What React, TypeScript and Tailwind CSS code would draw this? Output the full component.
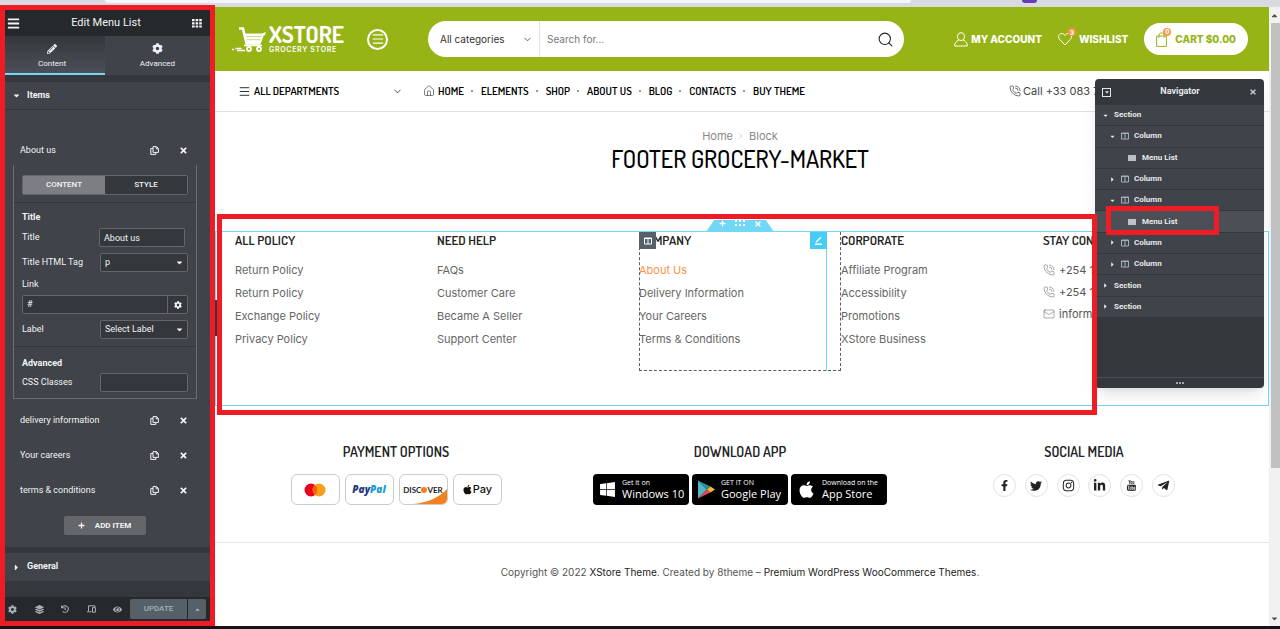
import type { ReactNode } from 'react';
import {
  FaApple,
  FaBars,
  FaCaretDown,
  FaCaretRight,
  FaCaretUp,
  FaCog,
  FaEye,
  FaFacebookF,
  FaHistory,
  FaInstagram,
  FaLayerGroup,
  FaLinkedinIn,
  FaPencilAlt,
  FaPlus,
  FaTelegramPlane,
  FaTimes,
  FaTwitter,
  FaWindows,
} from 'react-icons/fa';
import { TfiYoutube } from 'react-icons/tfi';
import { ChevronDown, ChevronRight, House, Mail, Menu, PhoneCall, Search } from 'lucide-react';

const NAV_LINKS = ['HOME', 'ELEMENTS', 'SHOP', 'ABOUT US', 'BLOG', 'CONTACTS', 'BUY THEME'];

const TREE = [
  { label: 'Section', depth: 0, open: true },
  { label: 'Column', depth: 1, open: true },
  { label: 'Menu List', depth: 2 },
  { label: 'Column', depth: 1 },
  { label: 'Column', depth: 1, open: true },
  { label: 'Menu List', depth: 2, active: true },
  { label: 'Column', depth: 1 },
  { label: 'Column', depth: 1 },
  { label: 'Section', depth: 0 },
  { label: 'Section', depth: 0 },
];

const SOCIAL = [
  { name: 'Facebook', icon: <FaFacebookF size={11} /> },
  { name: 'Twitter', icon: <FaTwitter size={12} /> },
  { name: 'Instagram', icon: <FaInstagram size={13} /> },
  { name: 'LinkedIn', icon: <FaLinkedinIn size={13} /> },
  { name: 'YouTube', icon: <TfiYoutube size={11} /> },
  { name: 'Telegram', icon: <FaTelegramPlane size={13} /> },
];

const HEADING_FONT = "font-['Dosis','Liberation_Sans_Narrow',sans-serif]";

export default function App() {
  return (
    <div className="flex min-h-screen flex-col overflow-hidden bg-white font-['Inter',sans-serif]">
      <BrowserStrip />
      <div className="flex flex-1">
        <EditorPanel />
        <main className="relative min-w-0 flex-1">
          <SiteHeader />
          <MenuBar />
          <PageTitle />
          <FooterColumns />
          <FooterWidgets />
          <div className="mt-[37px] border-t border-[#e6e6e6] pt-[21px] pr-1 text-center text-[10px] leading-4 text-[#555]">
            Copyright © 2022 <a href="#" className="text-[#222]">XStore Theme</a>. Created by 8theme –{' '}
            <a href="#" className="text-[#222]">Premium WordPress WooCommerce Themes</a>.
          </div>
          <Navigator />
        </main>
        <div className="flex w-[11px] shrink-0 flex-col items-center bg-[#f1f1f1] text-[#505050]">
          <div className="flex h-4 items-center"><FaCaretUp size={9} /></div>
          <div className="h-[445px] w-[9px] self-end bg-[#c1c1c1]" />
          <div className="mt-auto flex h-4 items-center"><FaCaretDown size={9} /></div>
        </div>
      </div>
      <div className="h-[3px] bg-[#141414]" />
    </div>
  );
}

function BrowserStrip() {
  return (
    <div className="flex h-[7px] items-start bg-[#d9d9e1]">
      <div className="ml-[105px] h-[3px] w-[63%] rounded-b-lg bg-[#f5f5fa]" />
      <div className="ml-[111px] h-[3px] w-[15px] rounded-b-sm bg-[#673ab7]" />
    </div>
  );
}

function EditorPanel() {
  return (
    <aside className="relative z-20 -mt-[2px] flex w-[215px] shrink-0 flex-col border-[5px] border-[#ee1c25] bg-[#34383c] font-['Roboto',sans-serif] text-[9px] text-[#f1f3f5]">
      <div className="flex h-[26px] items-center justify-between bg-[#26292c] px-[2px]">
        <button aria-label="Menu"><FaBars size={13} /></button>
        <h2 className="text-[11px]">Edit Menu List</h2>
        <button aria-label="Widgets" className="pr-[6px]"><GridIcon /></button>
      </div>

      <div className="flex h-[39px] text-[8px]">
        <button className="flex w-[100px] flex-col items-center justify-center gap-1 border-b-2 border-[#71d7f7] bg-linear-to-b from-[#34383c] to-[#4c4f58] pt-1 pr-[6px]">
          <FaPencilAlt size={10} />
          Content
        </button>
        <button className="flex flex-1 flex-col items-center justify-center gap-1 border-b-2 border-[#404349] bg-[#404349] pt-1">
          <FaCog size={11} />
          Advanced
        </button>
      </div>

      <button className="mt-[7px] flex h-7 items-center gap-[6px] border-b border-[#34383c] bg-[#404349] pl-[7px] font-bold">
        <FaCaretDown size={9} />
        Items
      </button>

      <div className="flex flex-col bg-[#404349] pt-[26px] pb-3">
        <RepeaterRow label="About us" className="h-[29px]" />

        <div className="mr-[13px] ml-2 border border-t-0 border-[#6a6d72] pt-[10px] pb-[6px]">
          <div className="mx-2 flex h-5 rounded-xs border border-[#64666a] text-[8px] font-medium">
            <button className="flex-1 bg-[#7c7e83]">CONTENT</button>
            <button className="flex-1 bg-[#34383c]">STYLE</button>
          </div>
          <div className="mt-[7px] border-t border-[#34383c] px-2 pt-2">
            <h3 className="leading-3 font-bold">Title</h3>
            <div className="mt-[5px] flex items-center justify-between pr-[3px]">
              <label htmlFor="item-title">Title</label>
              <input id="item-title" defaultValue="About us" className="h-[19px] w-[86px] rounded-xs border border-[#64666a] bg-[#34383c] px-1" />
            </div>
            <SelectRow id="html-tag" label="Title HTML Tag" value="p" />
            <label htmlFor="item-link" className="mt-[6px] block leading-3">Link</label>
            <div className="mt-[5px] flex h-[19px] rounded-xs border border-[#64666a] bg-[#34383c]">
              <input id="item-link" defaultValue="#" className="min-w-0 flex-1 px-1" />
              <button aria-label="Link options" className="flex w-5 items-center justify-center border-l border-[#64666a]">
                <FaCog size={8} />
              </button>
            </div>
            <SelectRow id="item-label" label="Label" value="Select Label" />
          </div>
          <div className="mt-[7px] border-t border-[#34383c] px-2 pt-[10px]">
            <h3 className="leading-3 font-bold">Advanced</h3>
            <div className="mt-1 flex items-center justify-between">
              <label htmlFor="css-classes">CSS Classes</label>
              <input id="css-classes" className="h-[19px] w-[88px] rounded-xs border border-[#64666a] bg-[#34383c] px-1" />
            </div>
          </div>
        </div>

        <RepeaterRow label="delivery information" className="mt-1 h-[35px]" />
        <RepeaterRow label="Your careers" className="h-[35px]" />
        <RepeaterRow label="terms & conditions" className="h-[35px]" />
        <button className="mt-2 mr-[6px] flex h-[19px] w-[82px] items-center justify-center gap-[10px] self-center rounded-xs bg-[#64666a] text-[8px] font-bold">
          <FaPlus size={7} />
          ADD ITEM
        </button>
      </div>

      <button className="mt-[6px] flex h-7 items-center gap-[6px] bg-[#404349] pl-[7px] font-bold">
        <FaCaretRight size={9} />
        General
      </button>

      <div className="mt-auto flex h-6 items-center bg-[#26292c] pl-[3px] text-[#a4afb7]">
        <div className="flex flex-1 items-center justify-between pr-2">
          <button aria-label="Settings"><FaCog size={9} /></button>
          <button aria-label="Structure"><FaLayerGroup size={9} /></button>
          <button aria-label="History"><FaHistory size={8} /></button>
          <button aria-label="Responsive mode"><DevicesIcon /></button>
          <button aria-label="Preview"><FaEye size={9} /></button>
        </div>
        <button className="h-5 w-[57px] rounded-l-xs bg-[#556068] text-[8px] font-medium">UPDATE</button>
        <button aria-label="Save options" className="mr-1 ml-px flex h-5 w-[18px] items-center justify-center rounded-r-xs bg-[#556068]">
          <FaCaretUp size={7} />
        </button>
      </div>
    </aside>
  );
}

function RepeaterRow({ label, className }: { label: string; className: string }) {
  return (
    <div className={`flex shrink-0 items-center pr-[22px] pl-[15px] ${className}`}>
      <span className="flex-1">{label}</span>
      <button aria-label={`Duplicate ${label}`} className="mr-5"><CopyIcon /></button>
      <button aria-label={`Remove ${label}`}><FaTimes size={9} /></button>
    </div>
  );
}

function SelectRow({ id, label, value }: { id: string; label: string; value: string }) {
  return (
    <div className="mt-[6px] flex items-center justify-between">
      <label htmlFor={id}>{label}</label>
      <div className="relative flex w-[88px] items-center">
        <select id={id} className="h-[19px] w-full appearance-none rounded-xs border border-[#64666a] bg-[#34383c] px-1">
          <option>{value}</option>
        </select>
        <FaCaretDown size={9} className="pointer-events-none absolute right-1" />
      </div>
    </div>
  );
}

function SiteHeader() {
  return (
    <header className="flex h-16 items-center bg-[#96b416] pr-[21px] pl-[17px] text-white">
      <a href="#" className="flex w-[114px] items-center gap-[2px]">
        <CartLogo />
        <span className="flex flex-col">
          <span className={`${HEADING_FONT} text-[23px] leading-[22px] font-bold`}>XSTORE</span>
          <span className="text-[7px] leading-[10px] font-semibold tracking-widest whitespace-nowrap">GROCERY STORE</span>
        </span>
      </a>
      <button aria-label="Open menu" className="ml-[21px] flex size-[21px] items-center justify-center rounded-full border-2 border-white">
        <Menu size={14} strokeWidth={2} />
      </button>
      <form className="mr-[50px] ml-[40px] flex h-9 min-w-0 flex-1 items-center rounded-full bg-white text-[10px] text-[#555]">
        <div className="relative flex h-full w-[112px] items-center border-r border-[#e1e1e1]">
          <select aria-label="Category" className="h-full w-full appearance-none pl-3 text-[#333]">
            <option>All categories</option>
          </select>
          <ChevronDown size={11} strokeWidth={2} className="pointer-events-none absolute right-[6px]" />
        </div>
        <input aria-label="Search" placeholder="Search for..." className="h-full min-w-0 flex-1 px-[7px] placeholder:text-[#777]" />
        <button aria-label="Submit search" className="mr-[10px] text-[#222]"><Search size={17} strokeWidth={1.5} /></button>
      </form>
      <div className="flex items-center gap-4 text-[10px] font-extrabold whitespace-nowrap">
        <a href="#" className="flex items-center gap-[3px]"><UserIcon />MY ACCOUNT</a>
        <a href="#" className="flex items-center gap-[7px]">
          <span className="relative"><HeartIcon /><Count value={3} /></span>
          WISHLIST
        </a>
        <a href="#" className="flex h-8 items-center gap-2 rounded-full bg-white px-3 text-[#96b416]">
          <span className="relative"><BagIcon /><Count value={0} /></span>
          CART $0.00
        </a>
      </div>
    </header>
  );
}

function Count({ value }: { value: number }) {
  return (
    <span className="absolute -top-1 -right-1 flex size-2 items-center justify-center rounded-full bg-[#fe9345] text-[6px] text-white">
      {value}
    </span>
  );
}

function MenuBar() {
  return (
    <div className={`${HEADING_FONT} flex h-[41px] items-center border-b border-[#e1e1e1] pl-[23px] text-[11px] font-semibold text-black`}>
      <button className="flex w-[165px] items-center gap-[3px]">
        <Menu size={13} strokeWidth={1.5} />
        <span>ALL DEPARTMENTS</span>
        <ChevronDown size={11} strokeWidth={1.5} className="ml-auto" />
      </button>
      <nav className="ml-5 flex items-center">
        <House size={12} strokeWidth={1.5} className="mr-[3px] text-[#555]" />
        {NAV_LINKS.map((link, i) => (
          <span key={link} className="flex items-center">
            {i > 0 && <span className="mr-2 ml-[7px] size-[2px] rounded-full bg-[#777]" />}
            <a href="#">{link}</a>
          </span>
        ))}
      </nav>
      <a href="#" className="ml-auto flex w-[260px] items-center gap-[2px] overflow-hidden font-['Inter',sans-serif] font-normal whitespace-nowrap text-[#444]">
        <PhoneCall size={12} strokeWidth={1.5} />
        Call +33 083 7
      </a>
    </div>
  );
}

function PageTitle() {
  return (
    <div className="flex flex-col items-center pt-4 pr-1">
      <div className="flex items-center gap-1 text-[11px] leading-4 text-[#888]">
        <a href="#">Home</a>
        <ChevronRight size={8} className="text-[#bbb]" />
        <span>Block</span>
      </div>
      <h1 className={`${HEADING_FONT} text-[24px] leading-[30px] font-medium text-black`}>FOOTER GROCERY-MARKET</h1>
    </div>
  );
}

function FooterColumns() {
  return (
    <section className="relative mt-[57px] border border-[#71d7f7]">
      <div className="grid h-[173px] grid-cols-5 items-start overflow-hidden pr-[23px] pl-[19px]">
        <FooterColumn title="ALL POLICY" links={['Return Policy', 'Return Policy', 'Exchange Policy', 'Privacy Policy']} />
        <FooterColumn title="NEED HELP" links={['FAQs', 'Customer Care', 'Became A Seller', 'Support Center']} />
        <div className="relative h-[139px]">
          <FooterColumn title="COMPANY" links={['About Us', 'Delivery Information', 'Your Careers', 'Terms & Conditions']} active="About Us" />
          <div className="pointer-events-none absolute inset-y-0 left-0 w-[188px] border-r border-[#71d7f7]" />
          <div className="pointer-events-none absolute inset-0 border border-t-0 border-dashed border-[#556068]" />
          <button aria-label="Edit column" className="absolute top-0 left-0 flex size-[17px] items-center justify-center bg-[#556068] text-white">
            <ColumnIcon />
          </button>
          <button aria-label="Edit widget" className="absolute top-0 left-[171px] flex size-[17px] items-center justify-center bg-[#47ccf6] text-white">
            <EditIcon />
          </button>
        </div>
        <FooterColumn title="CORPORATE" links={['Affiliate Program', 'Accessibility', 'Promotions', 'XStore Business']} />
        <div className="overflow-hidden whitespace-nowrap">
          <h4 className={`${HEADING_FONT} pt-[2px] text-[13px] leading-3 font-semibold text-[#222]`}>STAY CON</h4>
          <ul className="mt-[13px] text-[11px] leading-[22px] text-[#555]">
            <li className="flex items-center gap-1"><PhoneCall size={12} strokeWidth={1} />+254 1</li>
            <li className="flex items-center gap-1"><PhoneCall size={12} strokeWidth={1} />+254 1</li>
            <li className="flex items-center gap-1"><Mail size={12} strokeWidth={1} />informa</li>
          </ul>
        </div>
      </div>

      {/* Section handle */}
      <div className="absolute right-1 bottom-full left-0 flex justify-center">
        <div className="flex h-3 w-[68px] items-start justify-center gap-[9px] bg-[#71d7f7] text-white [clip-path:polygon(12%_0,88%_0,100%_100%,0_100%)]">
          <button aria-label="Add section"><FaPlus size={7} /></button>
          <button aria-label="Drag section"><DotsIcon /></button>
          <button aria-label="Delete section"><FaTimes size={8} /></button>
        </div>
      </div>

      {/* Highlight frame */}
      <div className="pointer-events-none absolute -top-[18px] right-[171px] -bottom-[10px] left-px z-20 border-[5px] border-[#ee1c25]" />
      {/* Panel collapse handle */}
      <div className="absolute top-[68px] -left-px flex h-9 w-[3px] items-center bg-[#34383c]" />
    </section>
  );
}

function FooterColumn({ title, links, active }: { title: string; links: string[]; active?: string }) {
  return (
    <div className="whitespace-nowrap">
      <h4 className={`${HEADING_FONT} pt-[2px] text-[13px] leading-3 font-semibold text-[#222]`}>{title}</h4>
      <ul className="mt-[13px] text-[11px] leading-[23px] text-[#666]">
        {links.map((link, i) => (
          <li key={i}>
            <a href="#" className={link === active ? 'text-[#fe9345]' : ''}>{link}</a>
          </li>
        ))}
      </ul>
    </div>
  );
}

function FooterWidgets() {
  return (
    <div className="grid grid-cols-3 pt-[36px] pr-[13px] pl-[9px]">
      <Widget title="PAYMENT OPTIONS">
        <div className="flex gap-[5px]">
          <PayCard>
            <svg width="22" height="14" viewBox="0 0 22 14" aria-label="Mastercard">
              <circle cx="7" cy="7" r="6.5" fill="#eb001b" />
              <circle cx="15" cy="7" r="6.5" fill="#f79e1b" />
              <path d="M11 2a6.5 6.5 0 0 1 0 10a6.5 6.5 0 0 1 0-10z" fill="#ff5f00" />
            </svg>
          </PayCard>
          <PayCard>
            <span className="font-['Open_Sans',sans-serif] text-[10px] font-extrabold text-[#253b80] italic">
              Pay<span className="text-[#179bd7]">Pal</span>
            </span>
          </PayCard>
          <PayCard>
            <svg className="absolute right-0 bottom-0" width="34" height="15" viewBox="0 0 34 15">
              <path d="M0 15C14 14 27 8 34 0v15z" fill="#f48120" />
            </svg>
            <span className="relative flex items-center font-['Lato',sans-serif] text-[8px] font-bold text-[#222]">
              DISC<span className="size-[6px] rounded-full bg-[#f48120]" />VER
            </span>
          </PayCard>
          <PayCard>
            <FaApple size={11} className="text-[#111]" />
            <span className="text-[11px] font-medium text-[#111]">Pay</span>
          </PayCard>
        </div>
      </Widget>
      <Widget title="DOWNLOAD APP">
        <div className="flex gap-[3px]">
          <StoreBadge icon={<FaWindows size={17} />} top="Get it on" name="Windows 10" />
          <StoreBadge icon={<PlayIcon />} top="GET IT ON" name="Google Play" />
          <StoreBadge icon={<FaApple size={19} />} top="Download on the" name="App Store" />
        </div>
      </Widget>
      <Widget title="SOCIAL MEDIA">
        <div className="flex w-[182px] justify-between">
          {SOCIAL.map(({ name, icon }) => (
            <a key={name} href="#" aria-label={name} className="flex size-[23px] items-center justify-center rounded-full border border-[#e1e1e1] text-[#222]">
              {icon}
            </a>
          ))}
        </div>
      </Widget>
    </div>
  );
}

function Widget({ title, children }: { title: string; children: ReactNode }) {
  return (
    <div className="flex flex-col items-center">
      <h4 className={`${HEADING_FONT} text-[14px] leading-5 font-semibold text-[#222]`}>{title}</h4>
      <div className="mt-3">{children}</div>
    </div>
  );
}

function PayCard({ children }: { children: ReactNode }) {
  return (
    <div className="relative flex h-[31px] w-[49px] items-center justify-center overflow-hidden rounded-md border border-[#ccc]">
      {children}
    </div>
  );
}

function StoreBadge({ icon, top, name }: { icon: ReactNode; top: string; name: string }) {
  return (
    <a href="#" className="flex h-[31px] w-24 items-center gap-[6px] rounded-sm bg-black pl-[6px] font-['Open_Sans',sans-serif] whitespace-nowrap text-white">
      {icon}
      <span className="flex flex-col">
        <span className="text-[7px] leading-[9px]">{top}</span>
        <span className="text-[11px] leading-[14px]">{name}</span>
      </span>
    </a>
  );
}

function Navigator() {
  return (
    <div className="absolute top-[72px] right-[5px] z-10 flex h-[309px] w-[169px] flex-col rounded-sm bg-[#34383c] font-['Roboto',sans-serif] text-[8px] font-bold text-[#e6e9ec] shadow-lg">
      <div className="flex h-[26px] items-center justify-between px-[7px]">
        <button aria-label="Dock" className="flex size-[9px] items-center justify-center border border-[#e6e9ec]">
          <FaCaretDown size={6} />
        </button>
        <h2 className="text-[9px]">Navigator</h2>
        <button aria-label="Close" className="text-[#c2cbd2]"><FaTimes size={8} /></button>
      </div>
      <ul className="flex h-[213px] flex-col">
        {TREE.map((node, i) => (
          <li
            key={i}
            className={`relative flex flex-1 items-center border-b border-[#34383c] ${node.active ? 'bg-[#4c4f56]' : 'bg-[#404349]'}`}
          >
            <button
              className={`flex items-center ${node.depth === 0 ? 'gap-[5px] pl-[7px]' : node.depth === 1 ? 'gap-[5px] pl-[14px]' : 'gap-[6px] pl-[33px]'}`}
            >
              {node.depth < 2 && (node.open ? <FaCaretDown size={7} /> : <FaCaretRight size={7} />)}
              {node.depth === 1 && <span className="text-[#a4afb7]"><ColumnIcon /></span>}
              {node.depth === 2 && <ListIcon />}
              {node.label}
            </button>
            {node.active && (
              <span className="pointer-events-none absolute -top-[5px] left-[11px] z-10 h-[29px] w-[113px] border-[5px] border-[#ee1c25]" />
            )}
          </li>
        ))}
      </ul>
      <div className="mt-auto flex h-[11px] items-center justify-center gap-px border-t border-[#4c4f56]">
        <span className="size-[2px] rounded-full bg-[#c2cbd2]" />
        <span className="size-[2px] rounded-full bg-[#c2cbd2]" />
        <span className="size-[2px] rounded-full bg-[#c2cbd2]" />
      </div>
    </div>
  );
}

/* Icons */

function GridIcon() {
  return (
    <svg width="10" height="9" viewBox="0 0 10 9" fill="currentColor">
      <path d="M0 0h2.6v2.2H0zM3.6 0h2.6v2.2H3.6zM7.2 0h2.6v2.2H7.2zM0 3.2h2.6v2.2H0zM3.6 3.2h2.6v2.2H3.6zM7.2 3.2h2.6v2.2H7.2zM0 6.4h2.6v2.2H0zM3.6 6.4h2.6v2.2H3.6zM7.2 6.4h2.6v2.2H7.2z" />
    </svg>
  );
}

function DotsIcon() {
  return (
    <svg width="10" height="6" viewBox="0 0 10 6" fill="currentColor">
      <path d="M0 0h2v2H0zM4 0h2v2H4zM8 0h2v2H8zM0 4h2v2H0zM4 4h2v2H4zM8 4h2v2H8z" />
    </svg>
  );
}

function ListIcon() {
  return (
    <svg width="8" height="6" viewBox="0 0 8 6" fill="currentColor">
      <path d="M0 0h8v6H0z" opacity=".5" />
      <path d="M0 .5h8v1H0zM0 2.5h8v1H0zM0 4.500h8v1H0z" />
    </svg>
  );
}

function CopyIcon() {
  return (
    <svg width="9" height="9" viewBox="0 0 9 9" fill="none" stroke="currentColor">
      <path d="M3 .6h3.6l1.8 1.8v4H3zM6.2.8v2h2M3 2.4H.8v6h5V6.6" />
    </svg>
  );
}

function DevicesIcon() {
  return (
    <svg width="9" height="8" viewBox="0 0 9 8" fill="none" stroke="currentColor">
      <path d="M8 2V.8H1.5V6M0 6.8h4.6M5.5 2.6h2.9v4.6H5.5z" />
    </svg>
  );
}

function ColumnIcon() {
  return (
    <svg width="8" height="8" viewBox="0 0 8 8" fill="none" stroke="currentColor">
      <path d="M.5 1h7v6h-7zM4 1v6M.5 1.5h7" />
    </svg>
  );
}

function EditIcon() {
  return (
    <svg width="9" height="9" viewBox="0 0 9 9" fill="none" stroke="currentColor" strokeWidth="1.4">
      <path d="M2 6.2L6.8 1.2M1 8.3h7" />
    </svg>
  );
}

function UserIcon() {
  return (
    <svg width="14" height="15" viewBox="0 0 14 15" fill="none" stroke="currentColor">
      <ellipse cx="7" cy="4.6" rx="3.6" ry="4" />
      <path d="M4.8 8.2C2 9.2.8 11 .6 14h12.8c-.2-3-1.4-4.8-4.2-5.8" />
    </svg>
  );
}

function HeartIcon() {
  return (
    <svg width="14" height="14" viewBox="0 0 14 14" fill="none" stroke="currentColor">
      <path d="M7 13L1.5 7.2C-.5 4.5 1 1.5 3.8 1.5 5.4 1.5 6.5 2.5 7 3.5 7.5 2.5 8.6 1.5 10.2 1.5 13 1.5 14.5 4.5 12.5 7.2z" />
    </svg>
  );
}

function BagIcon() {
  return (
    <svg width="11" height="15" viewBox="0 0 11 15" fill="none" stroke="currentColor">
      <path d="M.6 4h9.8v10.4H.6zM3 5.8V3C3 .2 8 .2 8 3v2.8" />
    </svg>
  );
}

function CartLogo() {
  return (
    <svg width="35" height="27" viewBox="0 0 35 27" fill="none" stroke="white" className="shrink-0">
      <path d="M7 2.5h4l3.5 15h14" strokeWidth="2.6" />
      <path d="M12.5 7.5H30L34 6l-1 3-1.5 1L29 17H15z" fill="white" stroke="none" />
      <path d="M14 10.5h15.5M14.5 13.7h14" stroke="#96b416" strokeWidth=".5" />
      <path d="M12 19.5h18M0 23.5h2M3.5 22.5h6M5 24.5h8" strokeWidth="1.5" />
      <circle cx="17" cy="23" r="2" strokeWidth="1.8" />
      <circle cx="27" cy="23" r="2" strokeWidth="1.8" />
    </svg>
  );
}

function PlayIcon() {
  return (
    <svg width="17" height="19" viewBox="0 0 17 19">
      <path d="M0 .5v18l9-9z" fill="#4fb8c4" />
      <path d="M0 .5l12.5 6L9 9.5z" fill="#2f8f92" />
      <path d="M0 18.5l12.5-6L9 9.5z" fill="#e8445a" />
      <path d="M12.5 6.5l4.5 3-4.5 3L9 9.5z" fill="#f5b942" />
    </svg>
  );
}
